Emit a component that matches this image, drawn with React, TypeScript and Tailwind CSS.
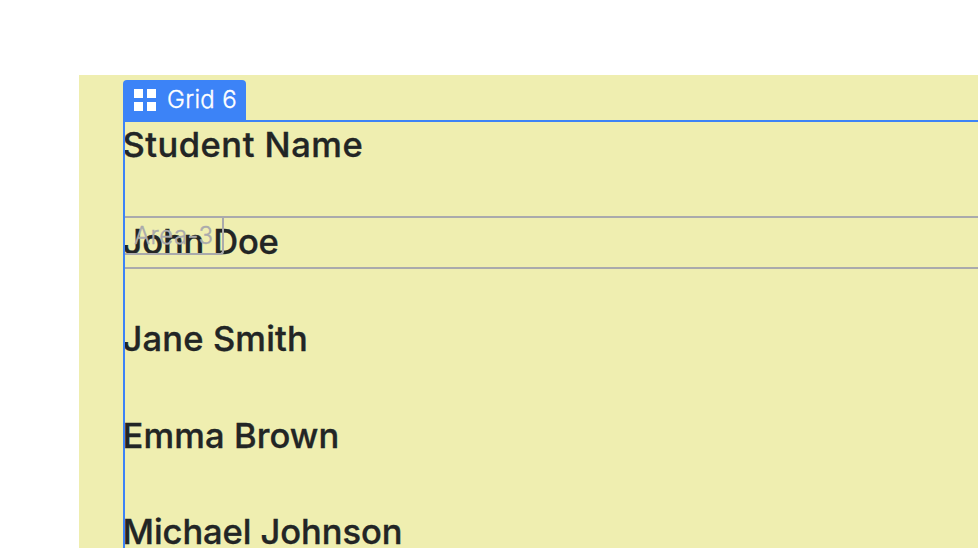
const students = [
  { name: 'Student Name', tracking: 'tracking-[0.5px]' },
  { name: 'John Doe', tracking: 'tracking-[-0.15px]' },
  { name: 'Jane Smith', tracking: 'tracking-[0.15px]' },
  { name: 'Emma Brown', tracking: 'tracking-[0.1px]' },
  { name: 'Michael Johnson', tracking: 'tracking-[-0.07px]' },
];

function GridTag() {
  return (
    <div className="absolute -top-[41px] -left-[1px] flex h-[41px] w-[123px] items-center rounded-t-[4px] bg-[#3c83f7] pb-px pl-[11px] text-white">
      <div className="grid grid-cols-2 gap-1">
        <span className="size-[9px] bg-white" />
        <span className="size-[9px] bg-white" />
        <span className="size-[9px] bg-white" />
        <span className="size-[9px] bg-white" />
      </div>
      <span className="ml-[11px] text-[24px] leading-[40px] font-light tracking-[0.35px] whitespace-nowrap [-webkit-text-stroke:0.35px_currentColor]">
        Grid 6
      </span>
    </div>
  );
}

function AreaOutline() {
  return (
    <div className="absolute top-[95px] -right-1 left-px h-[53px] border-2 border-l-0 border-[#aaaaac]">
      <div className="-mt-[1px] h-[38px] w-[99px] rounded-br-[4px] border-r-2 border-b-2 border-[#aaaaac] pl-[9px] text-[24px] leading-[37px] font-light tracking-[0.45px] whitespace-nowrap text-[#aaaaac] [-webkit-text-stroke:0.35px_currentColor]">
        Area-3
      </div>
    </div>
  );
}

export default function App() {
  return (
    <main className="h-[548px] w-[978px] overflow-hidden bg-white pt-[75px] pl-[79px] font-['Inter',sans-serif]">
      <section className="h-[473px] bg-[#efeeb0] pt-[46px] pl-[45px]">
        <div className="relative">
          <div className="-ml-[1.5px] grid auto-rows-[96.8px] pt-[0.2px]">
            {students.map(({ name, tracking }) => (
              <div
                key={name}
                className={`text-[34.5px] leading-[48px] font-medium whitespace-nowrap text-[#222525] [-webkit-text-stroke:0.35px_currentColor] ${tracking}`}
              >
                {name}
              </div>
            ))}
          </div>
          <AreaOutline />
          <div className="absolute -top-px -right-1 -bottom-2 -left-px border-2 border-[#3c83f7]" />
          <GridTag />
        </div>
      </section>
    </main>
  );
}
